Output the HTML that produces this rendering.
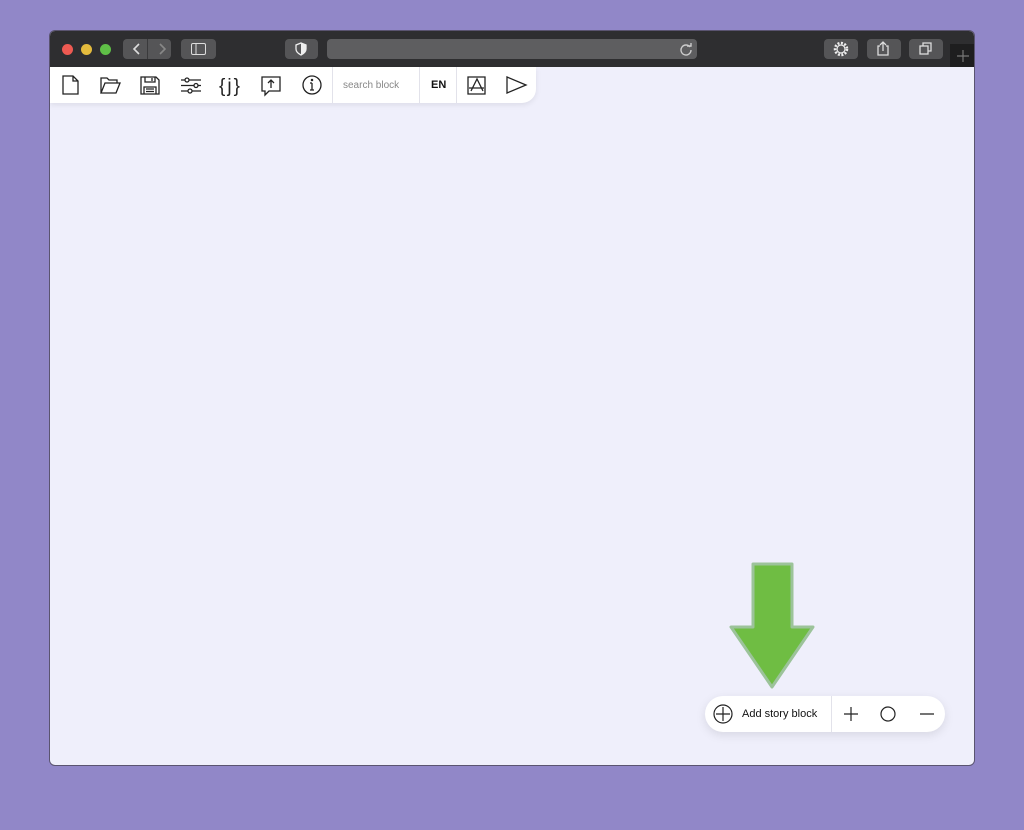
<!DOCTYPE html><html><head><style>
body{margin:0;width:1024px;height:830px;background:#9187c8;position:relative;overflow:hidden;font-family:"Liberation Sans",sans-serif}
.win{position:absolute;left:50px;top:31px;width:924px;height:734px;background:#efeffb;border-radius:5px;overflow:hidden;box-shadow:0 0 0 1px #5a5470}
.tb{position:absolute;left:0;top:0;width:924px;height:36px;background:#2e2e30}
.d{position:absolute;top:13px;width:11px;height:11px;border-radius:50%}
.btn{position:absolute;top:8px;height:20px;background:#555557;border-radius:4px}
.tool{position:absolute;left:0;top:36px;width:486px;height:36px;background:#fff;border-bottom-right-radius:14px;box-shadow:0 2px 6px rgba(0,0,0,.08)}
.sep{position:absolute;top:0;width:1px;height:36px;background:#e2e2ea}
svg{position:absolute}
.pill{position:absolute;left:655px;top:665px;width:240px;height:36px;background:#fff;border-radius:18px;box-shadow:0 3px 10px rgba(0,0,0,.1)}
</style></head><body>
<div class="win">
<div class="tb">
<div class="d" style="left:12px;background:#ee5a52"></div>
<div class="d" style="left:31px;background:#e4bb3d"></div>
<div class="d" style="left:50px;background:#5fbf47"></div>
<div class="btn" style="left:73px;width:48px"></div>
<div style="position:absolute;left:97px;top:8px;width:1px;height:20px;background:#3a3a3c"></div>
<svg style="left:80px;top:11px" width="40" height="14"><path d="M9 2 L4 7 L9 12" stroke="#ddd" stroke-width="1.6" fill="none"/><path d="M30 2 L35 7 L30 12" stroke="#888" stroke-width="1.6" fill="none"/></svg>
<div class="btn" style="left:131px;width:35px"></div>
<svg style="left:141px;top:12px" width="15" height="12"><rect x=".5" y=".5" width="14" height="11" rx="1.5" stroke="#ddd" fill="none"/><line x1="5" y1="1" x2="5" y2="11" stroke="#ddd"/></svg>
<div class="btn" style="left:235px;width:33px"></div>
<svg style="left:245px;top:11px" width="12" height="14"><path d="M6 1 L11 3 V7 C11 10 8 12 6 13 C4 12 1 10 1 7 V3Z" stroke="#eee" stroke-width="1.3" fill="none"/><path d="M6 1 L11 3 V7 C11 10 8 12 6 13Z" fill="#eee"/></svg>
<div class="btn" style="left:277px;width:370px;background:#5e5e60"></div>
<svg style="left:629px;top:11px" width="14" height="14"><path d="M11 5 A5 5 0 1 0 12 8" stroke="#ccc" stroke-width="1.4" fill="none"/><path d="M8 4 L12 4 L12 1" stroke="#ccc" stroke-width="1.4" fill="none"/></svg>
<div class="btn" style="left:774px;width:34px"></div>
<svg style="left:782px;top:9px" width="18" height="18"><circle cx="9" cy="9" r="6" stroke="#eee" stroke-width="2.5" fill="none" stroke-dasharray="2 1.5"/><circle cx="9" cy="9" r="4" stroke="#eee" stroke-width="1.2" fill="none"/></svg>
<div class="btn" style="left:817px;width:34px"></div>
<svg style="left:826px;top:10px" width="14" height="15"><path d="M4 5 H2 V14 H12 V5 H10 M7 10 V1 M4 4 L7 1 L10 4" stroke="#ddd" stroke-width="1.3" fill="none"/></svg>
<div class="btn" style="left:859px;width:34px"></div>
<svg style="left:869px;top:11px" width="14" height="14"><rect x="1" y="4" width="8" height="8" stroke="#ddd" fill="none" stroke-width="1.3"/><path d="M4 4 V1 H12 V9 H9" stroke="#ddd" fill="none" stroke-width="1.3"/></svg>
<div style="position:absolute;left:900px;top:13px;width:24px;height:23px;background:#1e1e1f"></div>
<svg style="left:906px;top:18px" width="14" height="14"><path d="M7 1V13M1 7H13" stroke="#777" stroke-width="1.2"/></svg>
</div>
<div class="tool">
<svg width="486" height="36" style="left:0;top:0" fill="none" stroke="#222" stroke-width="1.3">
<path d="M13 9 H23 L28 14 V27 H13Z M23 9 V14 H28"/>
<path d="M51 26 V11 H57 L59 13 H67 V16 M51 26 L55 16 H70 L66 26Z"/>
<path d="M91 10 H106 L109 13 V27 H91Z M95 10 V15 H105 V10 M102 11 V14 M94 27 V20 H106 V27 M96 22 H104 M96 24.5 H104"/>
<path d="M131 13 H151 M131 18.5 H151 M131 24 H151" /><circle cx="137" cy="13" r="2" fill="#fff"/><circle cx="146" cy="18.5" r="2" fill="#fff"/><circle cx="140" cy="24" r="2" fill="#fff"/>
<text x="169" y="25" font-family="Liberation Sans" font-size="19" fill="#222" stroke="none" letter-spacing="2">{j}</text>
<path d="M212 10 H230 V24 H219 L215 28 V24 H212Z M221 21 V13 M218 16 L221 13 L224 16"/>
<circle cx="262" cy="18" r="9"/><path d="M262 16 V23 M260 23 H264 M260 16 H262"/><circle cx="262" cy="13" r=".6" fill="#222"/>
<path d="M418 10 H435 V27 H418Z M421 24 L427 12 L433 24 M419 21 H434"/>
<path d="M457 10 L476 18 L457 26Z"/>
</svg>
<div class="sep" style="left:282px"></div>
<div style="position:absolute;left:293px;top:13px;font-size:10px;color:#888">search block</div>
<div class="sep" style="left:369px"></div>
<div style="position:absolute;left:381px;top:12px;font-size:11px;color:#111;font-weight:bold">EN</div>
<div class="sep" style="left:406px"></div>
</div>
<svg style="left:679px;top:530px" width="90" height="130"><path d="M24 3 H63 V66 H84 L43 126 L2 66 H24Z" fill="#6fbd43" stroke="#9cc39a" stroke-width="3" stroke-linejoin="round"/></svg>
<div class="pill">
<svg width="240" height="36" style="left:0;top:0" fill="none" stroke="#222" stroke-width="1.2">
<circle cx="18" cy="18" r="9"/><path d="M18 11V25M11 18H25"/>
<path d="M146 11V25M139 18H153"/><circle cx="183" cy="18" r="7"/><path d="M215 18H229"/>
</svg>
<div style="position:absolute;left:37px;top:12px;font-size:11px;color:#111">Add story block</div>
<div class="sep" style="left:126px"></div>
</div>
</div>
</body></html>
